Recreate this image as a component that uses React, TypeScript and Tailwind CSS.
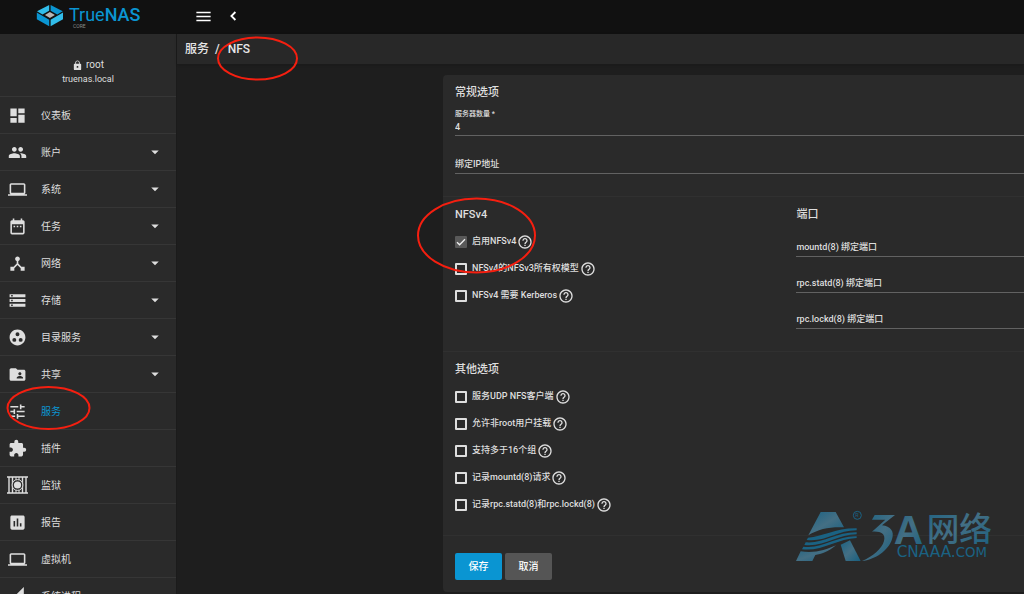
import React from 'react';
import {
  MdArrowDropDown,
  MdDashboard,
  MdDateRange,
  MdDeviceHub,
  MdExtension,
  MdFolderShared,
  MdGroupWork,
  MdHelpOutline,
  MdInsertChart,
  MdLaptop,
  MdLock,
  MdMenu,
  MdPeople,
  MdPermDataSetting,
  MdStorage,
  MdTune,
} from 'react-icons/md';

const JailIcon: React.FC<{ size?: number }> = () => (
  <svg width="21" height="18" viewBox="0 0 21 18" fill="none" stroke="currentColor">
    <path d="M0 1h21M0 17h21" strokeWidth="1.6" />
    <path d="M2 1v16M5.5 1v16M15.5 1v16M19 1v16" strokeWidth="1.4" />
    <path d="M9 1v3M12 1v3M9 14v3M12 14v3" strokeWidth="1" />
    <circle cx="10.5" cy="9" r="5.4" fill="#2a2a2a" strokeWidth="1" />
    <circle cx="10.5" cy="9" r="3.6" fill="currentColor" stroke="none" />
  </svg>
);

const NAV_ITEMS = [
  { title: '仪表板', icon: MdDashboard },
  { title: '账户', icon: MdPeople, sub: true },
  { title: '系统', icon: MdLaptop, sub: true },
  { title: '任务', icon: MdDateRange, sub: true },
  { title: '网络', icon: MdDeviceHub, sub: true },
  { title: '存储', icon: MdStorage, sub: true },
  { title: '目录服务', icon: MdGroupWork, sub: true },
  { title: '共享', icon: MdFolderShared, sub: true },
  { title: '服务', icon: MdTune, active: true },
  { title: '插件', icon: MdExtension },
  { title: '监狱', icon: JailIcon },
  { title: '报告', icon: MdInsertChart },
  { title: '虚拟机', icon: MdLaptop },
  { title: '系统进程', icon: MdPermDataSetting },
];

const NFS4_OPTIONS = [
  { id: 'v4', label: '启用NFSv4', checked: true },
  { id: 'v4_v3owner', label: 'NFSv4的NFSv3所有权模型' },
  { id: 'v4_krb', label: 'NFSv4 需要 Kerberos' },
];

const OTHER_OPTIONS = [
  { id: 'udp', label: '服务UDP NFS客户端' },
  { id: 'allow_nonroot', label: '允许非root用户挂载' },
  { id: 'userd_manage_gids', label: '支持多于16个组' },
  { id: 'mountd_log', label: '记录mountd(8)请求' },
  { id: 'statd_lockd_log', label: '记录rpc.statd(8)和rpc.lockd(8)' },
];

const Logo = () => (
  <svg width="106" height="26" viewBox="0 0 106 26" className="overflow-visible" role="img" aria-label="TrueNAS CORE">
    <path d="M13.200 2v5.800L6.500 11.400 1 8.200z" fill="#31bdea" />
    <path d="M14.600 2v5.800l6.700 3.600 5.500-3.200z" fill="#0a95d2" />
    <path d="M0.800 9.600l12.400 7.200v6.400L0.800 16.200z" fill="#0a95d2" />
    <path d="M27 9.600l-12.400 7.200v6.400L27 16.200z" fill="#31bdea" />
    <path d="M13.900 9l5 3-5 3-5-3z" fill="#b5b5b5" />
    <text x="33" y="18" fill="#0a95d2" fontSize="18" className="font-['Roboto']">
      True<tspan fontWeight="500">NAS</tspan>
    </text>
    <text x="37" y="25" fill="#8a8a8a" fontSize="5">CORE</text>
  </svg>
);

const Header = () => (
  <header className="flex h-[34px] shrink-0 items-center bg-[#111111] pb-[2px] text-white">
    <a href="#home" className="flex w-[177px] shrink-0 justify-center">
      <Logo />
    </a>
    <button aria-label="菜单" className="ml-[17px]">
      <MdMenu size={19} />
    </button>
    <button aria-label="返回" className="ml-3">
      <svg width="16" height="16" viewBox="0 0 16 16" fill="none" stroke="currentColor" strokeWidth="1.8">
        <path d="M10.400 4l-4 4 4 4" />
      </svg>
    </button>
  </header>
);

const Sidebar = () => (
  <aside className="w-[177px] shrink-0 overflow-hidden border-r border-[#1b1b1b] bg-[#2a2a2a]">
    <div className="flex h-[62px] flex-col items-center pt-6 text-[#dedede]">
      <div className="flex items-center gap-[3px] text-[10px] leading-[14px]">
        <MdLock size={11} />
        <span>root</span>
      </div>
      <div className="text-[9px] leading-[14px]">truenas.local</div>
    </div>
    <nav>
      {NAV_ITEMS.map((item) => {
        const Icon = item.icon;
        return (
          <a
            key={item.title}
            href="#"
            className="flex h-[37px] items-center border-t border-[#363636] pr-3 text-[10px] text-[#dedede]"
          >
            <span className="flex w-[35px] shrink-0 justify-center">
              <Icon size={19} />
            </span>
            <span className={item.active ? 'ml-[6px] flex-1 text-[#0a95d2]' : 'ml-[6px] flex-1'}>
              {item.title}
            </span>
            {item.sub && <MdArrowDropDown size={18} />}
          </a>
        );
      })}
    </nav>
  </aside>
);

const Heading: React.FC<{ children: React.ReactNode }> = ({ children }) => (
  <h2 className="text-[11px] leading-5 font-medium">{children}</h2>
);

// Empty field: the label rests on the line until something is typed
const Field: React.FC<{ id: string; label: string }> = ({ id, label }) => (
  <div className="grid">
    <input
      id={id}
      placeholder=" "
      className="peer col-start-1 row-start-1 h-[22px] w-full border-b border-[#626262] bg-transparent outline-none"
    />
    <label
      htmlFor={id}
      className="invisible col-start-1 row-start-1 pt-[2px] text-[9px] leading-5 font-medium peer-placeholder-shown:visible"
    >
      {label}
    </label>
  </div>
);

const Option: React.FC<{ id: string; label: string; checked?: boolean }> = ({ id, label, checked }) => (
  <div className="flex h-[27px] items-center">
    <span className="grid">
      <input
        id={id}
        type="checkbox"
        defaultChecked={checked}
        className="peer col-start-1 row-start-1 size-3 appearance-none rounded-[1px] border-2 border-[#dedede] checked:border-0 checked:bg-[#595959]"
      />
      <svg
        viewBox="0 0 12 12"
        className="pointer-events-none invisible col-start-1 row-start-1 size-3 peer-checked:visible"
      >
        <path d="M2 6.2l2.6 2.6L10 3.2" fill="none" stroke="#f0f0f0" strokeWidth="1.3" />
      </svg>
    </span>
    <label htmlFor={id} className="ml-[5px] text-[9px] font-medium">
      {label}
    </label>
    <button type="button" aria-label="帮助" className="ml-px">
      <MdHelpOutline size={16} />
    </button>
  </div>
);

const NfsForm = () => (
  <form className="min-w-0 flex-1 rounded-l-[4px] bg-[#2a2a2a] text-[#dedede]">
    <section className="pt-2 pb-[22px] pl-3">
      <Heading>常规选项</Heading>
      <div className="mt-[6px] mb-4">
        <label htmlFor="servers" className="block text-[7px] leading-[10px] font-medium">
          服务器数量 *
        </label>
        <input
          id="servers"
          defaultValue="4"
          className="block h-[17px] w-full border-b border-[#626262] bg-transparent pb-px text-[9px] font-medium outline-none"
        />
      </div>
      <Field id="bindip" label="绑定IP地址" />
    </section>

    <section className="grid grid-cols-[3fr_2fr] border-t border-[#303030] pt-2 pb-[22px] pl-3">
      <div>
        <Heading>NFSv4</Heading>
        <div className="mt-[3px]">
          {NFS4_OPTIONS.map((option) => (
            <Option key={option.id} {...option} />
          ))}
        </div>
      </div>
      <div>
        <Heading>端口</Heading>
        <div className="mt-[10px] flex flex-col gap-[14px]">
          <Field id="mountd_port" label="mountd(8) 绑定端口" />
          <Field id="rpcstatd_port" label="rpc.statd(8) 绑定端口" />
          <Field id="rpclockd_port" label="rpc.lockd(8) 绑定端口" />
        </div>
      </div>
    </section>

    <section className="border-t border-[#303030] pt-2 pb-[17px] pl-3">
      <Heading>其他选项</Heading>
      <div className="mt-[3px]">
        {OTHER_OPTIONS.map((option) => (
          <Option key={option.id} {...option} />
        ))}
      </div>
    </section>

    <div className="flex gap-[3px] border-t border-[#303030] pt-[17px] pb-3 pl-3 text-[10px] font-medium text-white">
      <button type="button" className="h-[27px] w-[47px] rounded-[2px] bg-[#0a95d2]">
        保存
      </button>
      <button type="button" className="h-[27px] w-[47px] rounded-[2px] bg-[#555555]">
        取消
      </button>
    </div>
  </form>
);

const Watermark = () => (
  <svg
    width="196"
    height="52"
    viewBox="48 60 588 156"
    className="pointer-events-none absolute right-8 bottom-8 overflow-visible"
    role="img"
    aria-label="3A网络"
  >
    <defs>
      <linearGradient id="wm" x1="0" y1="0" x2="1" y2="1">
        <stop offset="0" stopColor="#1a6283" />
        <stop offset="0.5" stopColor="#446f84" />
        <stop offset="1" stopColor="#175f80" />
      </linearGradient>
    </defs>
    <path d="M122 66h45l25 46c-40-2-76 4-107 24z" fill="url(#wm)" />
    <path d="M84 143c44-2 82-29 146-28v6c-60 0-92 36-150 29z" fill="#1a6283" />
    <path d="M77 157c52 5 92-31 153-30v6c-58 1-98 39-157 32z" fill="#1a6283" />
    <path d="M70 170c58 8 99-33 160-31v5c-58 2-103 41-164 34z" fill="#1a6283" />
    <path d="M62 184c40 7 76-4 106-18-24 20-44 26-62 29l-9 18H48z" fill="url(#wm)" />
    <path d="M182 164l28-13 32 62h-45z" fill="url(#wm)" />
    <circle cx="232" cy="76" r="12" fill="none" stroke="#1a6283" strokeWidth="3" />
    <text x="226" y="82" fontSize="16" fill="#1a6283">R</text>
    <path d="M284 75h61l-39 31c26 3 38 18 30 42-10 32-50 62-90 65 32-14 60-36 66-60 6-22-10-30-36-28l40-36h-40z" fill="url(#wm)" />
    <g className="font-['Noto_Sans_CJK_SC',sans-serif]" fill="url(#wm)">
      <text x="341" y="162" fontSize="122" fontWeight="700" className="font-['Liberation_Sans']">A</text>
      <text x="440" y="154" fontSize="98" fontWeight="500">网络</text>
    </g>
    <g className="font-['DejaVu_Sans',sans-serif]" fill="#1a6283">
      <text x="350" y="201" fontSize="46">
        CNAAA.<tspan fontSize="40">COM</tspan>
      </text>
    </g>
  </svg>
);

const Marks = () => (
  <svg
    className="pointer-events-none absolute inset-0 size-full"
    fill="none"
    stroke="#f51f10"
    strokeWidth="2"
    aria-hidden="true"
  >
    <ellipse cx="257.500" cy="58.500" rx="39.500" ry="21" />
    <ellipse cx="48.500" cy="408" rx="41" ry="21" />
    <ellipse cx="476.500" cy="235.500" rx="58.500" ry="37" />
  </svg>
);

export default function App() {
  return (
    <div className="relative flex h-screen flex-col overflow-hidden bg-[#1e1e1e] font-['Roboto','Noto_Sans_CJK_SC',sans-serif]">
      <Header />
      <div className="flex min-h-0 flex-1">
        <Sidebar />
        <main className="flex min-w-0 flex-1 flex-col">
          <div className="flex h-[30px] shrink-0 items-center bg-[#282828] pl-2 text-[12px] font-medium text-[#e6e6e6] shadow-sm">
            <a href="#services">服务</a>
            <span className="mr-2 ml-[6px]">/</span>
            <span>NFS</span>
          </div>
          <div className="flex pt-[11px] pl-[266px]">
            <NfsForm />
          </div>
        </main>
      </div>
      <Watermark />
      <Marks />
    </div>
  );
}
